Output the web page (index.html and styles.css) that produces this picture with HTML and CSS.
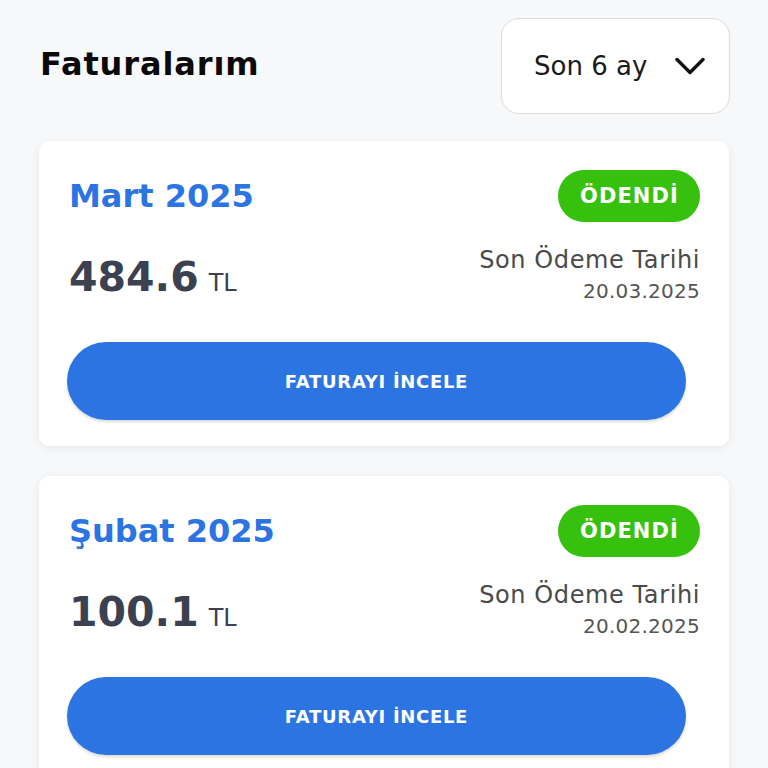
FILE: index.html
```html
<!DOCTYPE html>
<html lang="tr">
<head>
<meta charset="utf-8">
<title>Faturalarım</title>
<link rel="stylesheet" href="styles.css">
</head>
<body>
<div class="page">
  <header class="header">
    <h1 class="title">Faturalarım</h1>
    <button class="select">
      <span class="select-label">Son 6 ay</span>
      <svg class="chev" width="30" height="18" viewBox="0 0 30 18"><path d="M2 2.5 L15 15.5 L28 2.5" fill="none" stroke="#111" stroke-width="3.4" stroke-linecap="round" stroke-linejoin="round"/></svg>
    </button>
  </header>

  <section class="card">
    <div class="row top">
      <h2 class="month">Mart 2025</h2>
      <span class="badge">ÖDENDİ</span>
    </div>
    <div class="row mid">
      <div class="amount"><span class="num">484.6</span><span class="cur">TL</span></div>
      <div class="due">
        <div class="due-label">Son Ödeme Tarihi</div>
        <div class="due-date">20.03.2025</div>
      </div>
    </div>
    <button class="btn">FATURAYI İNCELE</button>
  </section>

  <section class="card">
    <div class="row top">
      <h2 class="month">Şubat 2025</h2>
      <span class="badge">ÖDENDİ</span>
    </div>
    <div class="row mid">
      <div class="amount"><span class="num">100.1</span><span class="cur">TL</span></div>
      <div class="due">
        <div class="due-label">Son Ödeme Tarihi</div>
        <div class="due-date">20.02.2025</div>
      </div>
    </div>
    <button class="btn">FATURAYI İNCELE</button>
  </section>
</div>
</body>
</html>
```

FILE: styles.css
```css
* { box-sizing: border-box; }
html, body { margin: 0; padding: 0; }
body {
  background: #f7f8fa;
  font-family: "DejaVu Sans", "Open Sans", sans-serif;
  width: 768px;
  height: 768px;
  overflow: hidden;
}
.page {
  padding: 18px 39px 0 39px;
}
.header {
  display: flex;
  justify-content: space-between;
  align-items: center;
  height: 96px;
  margin-bottom: 27px;
}
.title {
  margin: 0 0 4px 1px;
  font-size: 32px;
  font-weight: 700;
  letter-spacing: 0.9px;
  color: #0a0a0a;
}
.select {
  width: 229px;
  height: 96px;
  margin-right: -1px;
  background: #fff;
  border: 1px solid #dcdcdc;
  border-radius: 18px;
  display: flex;
  align-items: center;
  justify-content: flex-start;
  padding: 0 0 0 32px;
  gap: 28px;
  font-family: inherit;
  cursor: pointer;
}
.select-label {
  font-size: 26px;
  font-weight: 400;
  color: #1a1a1a;
}
.chev { display: block; margin-top: 0; }
.card {
  background: #fff;
  border-radius: 10px;
  box-shadow: 0 2px 8px rgba(0,0,0,0.07);
  padding: 29px 29px 26px 30px;
  margin-bottom: 30px;
}
.row {
  display: flex;
  justify-content: space-between;
}
.top { align-items: center; height: 52px; }
.month {
  margin: 0;
  font-size: 32px;
  font-weight: 700;
  color: #2b74e2;
}
.badge {
  background: #36c10e;
  color: #fff;
  font-weight: 700;
  font-size: 21px;
  letter-spacing: 1.1px;
  height: 52px;
  padding: 0 21px 0 22px;
  border-radius: 26px;
  display: flex;
  align-items: center;
}
.mid {
  margin-top: 26px;
  height: 76px;
  align-items: flex-start;
}
.amount {
  margin-top: 5px;
  display: flex;
  align-items: baseline;
  gap: 10px;
  color: #3b4150;
}
.num { font-size: 41px; font-weight: 700; }
.cur { font-size: 24px; font-weight: 400; }
.due { text-align: right; margin-top: -4px; }
.due-label { font-size: 24px; letter-spacing: 0.6px; color: #4a4a4a; line-height: 32px; }
.due-date { font-size: 20px; letter-spacing: 0.25px; color: #555; line-height: 30px; }
.btn {
  display: block;
  margin: 18px 0 0 -2px;
  width: 619px;
  height: 78px;
  border: none;
  border-radius: 39px;
  background: #2b74e2;
  color: #fff;
  font-family: inherit;
  font-weight: 700;
  font-size: 18px;
  letter-spacing: 0.7px;
  box-shadow: 0 2px 3px rgba(0,0,0,0.15);
}
```
